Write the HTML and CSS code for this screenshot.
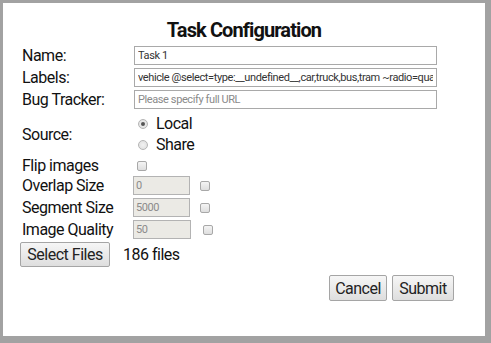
FILE: index.html
```html
<!DOCTYPE html>
<html>
<head>
<meta charset="utf-8">
<link rel="stylesheet" href="styles.css">
</head>
<body>
<div class="dialog">
  <h1 class="title">Task Configuration</h1>
  <div class="form">
    <div class="row text-row">
      <label class="lbl">Name:</label>
      <input class="txt" type="text" value="Task 1">
    </div>
    <div class="row text-row">
      <label class="lbl">Labels:</label>
      <input class="txt" type="text" value="vehicle @select=type:__undefined__,car,truck,bus,tram ~radio=quality:good,bad">
    </div>
    <div class="row text-row">
      <label class="lbl">Bug Tracker:</label>
      <input class="txt" type="text" placeholder="Please specify full URL">
    </div>
    <div class="row source-row">
      <label class="lbl">Source:</label>
      <div class="radios">
        <div class="radio-line"><span class="radio checked"></span><span class="rtext">Local</span></div>
        <div class="radio-line"><span class="radio"></span><span class="rtext">Share</span></div>
      </div>
    </div>
    <div class="row flip-row">
      <label class="lbl">Flip images</label>
      <span class="check"></span>
    </div>
    <div class="row num-row">
      <label class="lbl">Overlap Size</label>
      <input class="num" type="text" value="0" disabled>
      <span class="check"></span>
    </div>
    <div class="row num-row">
      <label class="lbl">Segment Size</label>
      <input class="num" type="text" value="5000" disabled>
      <span class="check"></span>
    </div>
    <div class="row num-row">
      <label class="lbl">Image Quality</label>
      <input class="num wide" type="text" value="50" disabled>
      <span class="check"></span>
    </div>
    <div class="files-row">
      <button class="btn select">Select Files</button>
      <span class="files">186 files</span>
    </div>
  </div>
  <div class="actions">
    <button class="btn cancel">Cancel</button>
    <button class="btn submit">Submit</button>
  </div>
</div>
</body>
</html>
```
FILE: styles.css
```css
html, body {
  margin: 0;
  padding: 0;
}
body {
  background: #a2a2a2;
  width: 491px;
  height: 343px;
  overflow: hidden;
  font-family: Roboto, "Liberation Sans", sans-serif;
  color: #111;
  letter-spacing: -0.5px;
}
.dialog {
  margin: 3px 0 0 3px;
  width: 482px;
  height: 333px;
  background: #fff;
  box-sizing: border-box;
  padding: 14px 48px 0 19px;
}
.title {
  margin: 0 -48px 0 -19px;
  text-align: center;
  font-size: 20px;
  font-weight: bold;
  line-height: 26px;
  letter-spacing: -0.9px;
  height: 26px;
}
.form {
  display: flex;
  flex-direction: column;
}
.row {
  display: flex;
  align-items: center;
}
.lbl {
  width: 112px;
  flex: none;
  font-size: 16px;
  line-height: 19px;
}
.text-row {
  height: 19px;
  margin-bottom: 3px;
}
.text-row:first-child {
  margin-top: 3px;
}
.txt {
  flex: 1;
  height: 19px;
  box-sizing: border-box;
  border: 1px solid #a9a9a9;
  padding: 0 3px;
  font-family: Roboto, "Liberation Sans", sans-serif;
  font-size: 11px;
  letter-spacing: -0.4px;
  color: #333;
  background: #fff;
  outline: none;
}
.txt::placeholder {
  color: #8a8a8a;
}
.source-row {
  height: 42px;
  margin-top: 1px;
}
.radios {
  display: flex;
  flex-direction: column;
  padding-left: 4px;
}
.radio-line {
  display: flex;
  align-items: center;
  height: 21px;
}
.radio {
  width: 10px;
  height: 10px;
  border-radius: 50%;
  border: 1px solid #b5b5b5;
  background: radial-gradient(circle, #f2f2f2, #dcdcdc);
  box-sizing: border-box;
  position: relative;
  margin-right: 8px;
}
.radio.checked::after {
  content: "";
  position: absolute;
  left: 2px;
  top: 2px;
  width: 4px;
  height: 4px;
  border-radius: 50%;
  background: #555;
}
.rtext {
  font-size: 16px;
}
.flip-row {
  height: 21px;
}
.check {
  width: 10px;
  height: 10px;
  box-sizing: border-box;
  border: 1px solid #a8a8a8;
  border-radius: 2px;
  background: linear-gradient(#f4f4f4, #dedede);
  margin-left: 3px;
  flex: none;
}
.num-row {
  height: 19px;
  margin-bottom: 3px;
}
.num {
  width: 57px;
  height: 19px;
  box-sizing: border-box;
  border: 1px solid #b3b3b3;
  background: #ebeae5;
  font-family: Roboto, "Liberation Sans", sans-serif;
  font-size: 11px;
  letter-spacing: -0.4px;
  color: #8b8b8b;
  padding: 0 2px;
  margin-left: -1px;
  margin-right: 7px;
}
.num.wide {
  width: 58px;
  margin-right: 9px;
}
.files-row {
  display: flex;
  align-items: center;
  margin-left: -2px;
}
.btn {
  font-family: Roboto, "Liberation Sans", sans-serif;
  font-size: 16px;
  letter-spacing: -0.5px;
  color: #222;
  border: 1px solid #a5a5a5;
  background: linear-gradient(#f6f6f6, #dedede);
  border-radius: 2px;
  padding: 0;
  height: 25px;
  margin: 0;
  white-space: nowrap;
}
.select {
  width: 90px;
}
.files {
  font-size: 16px;
  margin-left: 13px;
}
.actions {
  display: flex;
  justify-content: flex-end;
  gap: 5px;
  margin-top: 8px;
  margin-right: -17px;
}
.actions .btn {
  height: 26px;
}
.cancel {
  width: 58px;
}
.submit {
  width: 62px;
}
```
